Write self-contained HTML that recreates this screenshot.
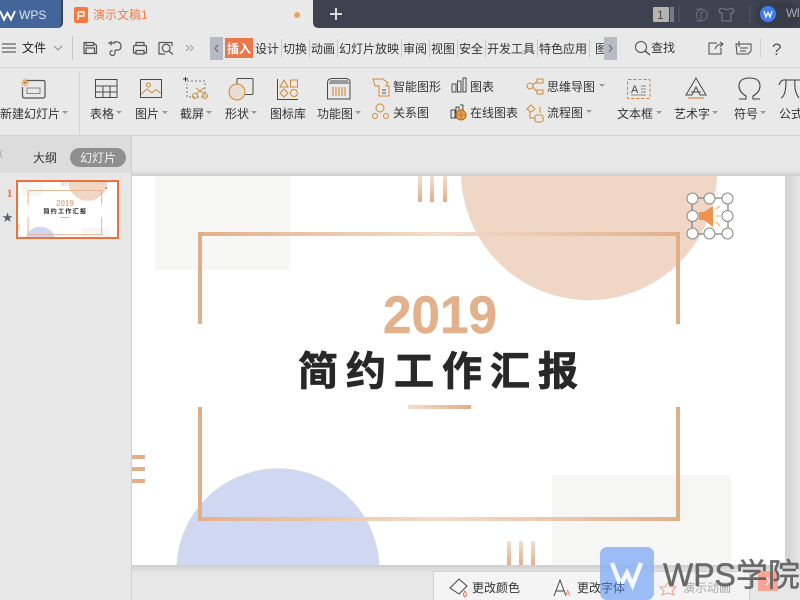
<!DOCTYPE html>
<html lang="zh"><head><meta charset="utf-8"><title>WPS</title>
<style>
html,body{margin:0;padding:0;width:800px;height:600px;overflow:hidden;background:#e7e7e7}
svg{display:block;position:absolute;left:0;top:0}
text{font-family:"Liberation Sans","Noto Sans CJK SC",sans-serif;font-size:12px;fill:#333}
.ic{fill:none;stroke:#4a4a4a;stroke-width:1}
.mi{fill:none;stroke:#555;stroke-width:1.200;stroke-linejoin:round}
.or{fill:none;stroke:#cf8a32;stroke-width:1}
</style></head><body>
<svg width="800" height="600" viewBox="0 0 800 600" xmlns="http://www.w3.org/2000/svg">
<defs>
<linearGradient id="gh" x1="0" x2="1" y1="0" y2="0"><stop offset="0" stop-color="#e2b08a"/><stop offset=".5" stop-color="#f2dccb"/><stop offset="1" stop-color="#e2b08a"/></linearGradient>
<linearGradient id="gm" x1="0" x2="1" y1="0" y2="0"><stop offset="0" stop-color="#f2dccb"/><stop offset="1" stop-color="#e2ae88"/></linearGradient>
<linearGradient id="gv" x1="0" x2="0" y1="0" y2="1"><stop offset="0" stop-color="#f2e0d2"/><stop offset="1" stop-color="#e2ae88"/></linearGradient>
<linearGradient id="sh" x1="0" x2="0" y1="0" y2="1"><stop offset="0" stop-color="#cfcfcf"/><stop offset="1" stop-color="#e7e7e7"/></linearGradient>
<linearGradient id="shr" x1="0" x2="1" y1="0" y2="0"><stop offset="0" stop-color="#d2d2d2"/><stop offset="1" stop-color="#e7e7e7"/></linearGradient>
<clipPath id="ct"><rect x="18" y="182" width="99" height="55"/></clipPath>
<clipPath id="cg"><rect x="587" y="36" width="17" height="24"/></clipPath>
</defs>

<!-- title bar -->
<rect width="800" height="28" fill="#3e4250"/>
<path d="M0 0H61V23Q61 28 56 28H0Z" fill="#44659a"/>
<path d="M63 0H313V22Q313 28 319 28H57Q63 28 63 22Z" fill="#e9e9e9"/>
<path d="M0 11L4 19.500L7.500 13L11 19.500L15 11" fill="none" stroke="#fff" stroke-width="2"/>
<text x="19" y="19" style="fill:#dbe3ef;font-size:12px">WPS</text>
<rect x="74" y="7" width="14" height="16" rx="2" fill="#f47a40"/>
<path d="M78 12H84V16H78M78 12V20" fill="none" stroke="#fff" stroke-width="1.400"/>
<text x="93" y="19" style="fill:#ef7b45">演示文稿1</text>
<circle cx="297" cy="15" r="3" fill="#eaa562"/>
<path d="M336 8V20M330 14H342" stroke="#d8dade" stroke-width="2"/>
<rect x="653" y="7" width="16" height="15" rx="1" fill="#b4b4b4"/>
<text x="657" y="19" style="fill:#5b4a40">1</text>
<path d="M671 7V22M673 7V22" stroke="#b4b4b4"/>
<path d="M679 6V22M750 5V23" stroke="#555967"/>
<circle cx="702" cy="15" r="5.500" fill="none" stroke="#6a6e7a"/><path d="M696 9H702M696 21H702M703 11Q699 15 702 19" fill="none" stroke="#6a6e7a"/>
<path d="M722 8L719 10L720 13H722V21H731V13H733L734 10L731 8Q727 11 722 8Z" fill="none" stroke="#7b7f8b"/>
<rect x="755" y="2" width="45" height="25" rx="12" fill="#383c49"/>
<circle cx="768" cy="14" r="8" fill="#3f7de8"/>
<path d="M764 11L766 17L768 12.500L770 17L772 11" fill="none" stroke="#fff" stroke-width="1.300"/>
<text x="786" y="17" style="fill:#a8abb3" textLength="14" lengthAdjust="spacing">WI</text>

<!-- menu row -->
<rect y="28" width="800" height="108" fill="#e9e9e9"/>
<rect y="67" width="800" height="1" fill="#d6d6d6"/>
<rect y="135" width="800" height="1" fill="#d2d2d2"/>
<path d="M2 44H16M2 48H16M2 52H16" stroke="#444"/>
<text x="22" y="52" style="fill:#222">文件</text>
<path d="M54 46L58 50L62 46" fill="none" stroke="#888"/>
<rect x="72" y="36" width="1" height="24" fill="#c8c8c8"/>
<path d="M84 42.500H93L96.500 45.500V53.500H84ZM86 42.500V45.500H93.500V42.500M86 53.500V48H94.500V53.500" class="mi"/>
<path d="M108 43H115M111 41V45.500M114 42Q121 41 121 46.500Q121 51 115 50M115 50V53M115 53A2.500 2.500 0 1 1 112.500 50.500" class="mi"/>
<path d="M136 45.500V42.500H144V45.500M133.500 53V47Q133.500 45.500 135 45.500H145Q146.500 45.500 146.500 47V53H144V50.500H136V53ZM136 50.500V54H144V50.500" class="mi"/>
<path d="M159 42.500H172V46M159 42.500V54H165M170 48A3.800 3.800 0 1 0 170 48.100M169 51L173 54.500" class="mi"/>
<path d="M186 45L189 48L186 51M190 45L193 48L190 51" fill="none" stroke="#999"/>
<rect x="210" y="37" width="13" height="23" fill="#b6bbc3"/>
<path d="M218 45L215 48.500L218 52" fill="none" stroke="#666"/>
<rect x="225" y="38" width="28" height="20" fill="#e8774a"/>
<text x="227" y="53" style="fill:#fff;font-weight:bold">插入</text>
<text x="255" y="53">设计</text><text x="283" y="53">切换</text><text x="311" y="53">动画</text>
<text x="339" y="53">幻灯片放映</text><text x="403" y="53">审阅</text><text x="431" y="53">视图</text>
<text x="459" y="53">安全</text><text x="487" y="53">开发工具</text><text x="539" y="53">特色应用</text>
<text x="595" y="53" clip-path="url(#cg)">图</text>
<path d="M281.500 39V58M309.500 39V58M337.500 39V58M401.500 39V58M429.500 39V58M457.500 39V58M485.500 39V58M537.500 39V58M589.500 39V58" stroke="#c9c9c9"/>
<rect x="604" y="37" width="13" height="23" fill="#b6bbc3"/>
<path d="M609 45L612 48.500L609 52" fill="none" stroke="#666"/>
<circle cx="641" cy="47" r="5.500" class="ic"/><path d="M645 51L650 55" stroke="#444" stroke-width="1.200"/>
<text x="651" y="52">查找</text>
<path d="M717 43H709V54H721V48M715 49Q717 44 722 44M720 42L723 44L720 47" class="ic"/>
<path d="M736 44H751V51L748 54H737ZM740 48H748M740 51H746M739 41V47M736 44H742" class="ic"/>
<rect x="760" y="38" width="1" height="20" fill="#cfcfcf"/>
<text x="772" y="55" style="font-size:17px;fill:#555">?</text>

<!-- ribbon -->
<rect x="79" y="72" width="1" height="62" fill="#d2d2d2"/>
<path d="M26 80.500H43Q45 80.500 45 82.500V96Q45 98 43 98H24Q22.500 98 22.500 96V87" class="mi"/><rect x="27" y="88" width="13" height="5.500" fill="none" stroke="#888"/>
<path d="M21 82.500H29M25 78.500V86.500M22 79.500L28 85.500M28 79.500L22 85.500" stroke="#d08a35" fill="none" stroke-width=".8"/>
<text x="0" y="118">新建幻灯片</text>
<path d="M95.500 79.500H117V97.500H95.500ZM95.500 86H117M95.500 92H117M103 86V97.500M110 86V97.500" class="ic"/>
<text x="90" y="118">表格</text>
<path d="M140.500 79.500H161.500V97.500H140.500Z" class="ic"/><circle cx="148.500" cy="85" r="2" class="or"/><path d="M141 94L147 89L152 93L156 89.500L161 93.500" class="or"/>
<text x="135" y="118">图片</text>
<path d="M187 81H205V97H187V84" fill="none" stroke="#777" stroke-dasharray="2 2"/>
<path d="M183 79H188M185.500 77V81.500" stroke="#333" fill="none"/>
<circle cx="195" cy="96" r="2.500" class="or"/><circle cx="205" cy="96" r="2.500" class="or"/><path d="M196 94L204 88M204 94L196 88" class="or"/>
<text x="180" y="118">截屏</text>
<rect x="237" y="78.500" width="16" height="16" rx="1" class="ic"/>
<circle cx="237" cy="92" r="8" fill="#e7ddd2" stroke="#cf8a32"/>
<text x="225" y="118">形状</text>
<path d="M277.500 79V99.500H298" class="ic"/>
<path d="M284 80L288 87H280Z" class="or"/><rect x="290.500" y="80" width="7" height="7" class="or"/>
<path d="M284 89L288 93L284 97L280 93Z" class="or"/><circle cx="294" cy="93" r="3.500" class="or"/>
<text x="270" y="118">图标库</text>
<path d="M327.500 83Q327.500 78.500 332 78.500H346Q350 78.500 350 83V99H327.500ZM330 81H348M329 83H349" class="ic"/>
<path d="M333 87V96M336 87V96M339 87V96M342 87V96M345 87V96" stroke="#cf7f25"/>
<text x="317" y="118">功能图</text>
<path d="M373 79H383L388 83L386 86H389V96H379V86H375Z" class="or"/><path d="M382 90H386M382 93H386" stroke="#555"/>
<text x="393" y="91">智能图形</text>
<circle cx="380" cy="108" r="4" class="or"/><circle cx="375" cy="116" r="2.500" class="or"/><circle cx="386" cy="116" r="2.500" class="or"/>
<text x="393" y="117">关系图</text>
<path d="M452 84H456V92H452ZM457.500 81H461V92H457.500ZM463 78H466V92H463Z" class="ic"/>
<text x="470" y="91">图表</text>
<path d="M451 110H455V118H451ZM456 107H459V118H456ZM460 105H463V112" class="ic"/>
<circle cx="461" cy="115" r="5" fill="#e8a24e" stroke="#b9691e"/><path d="M456 115H466M461 110V120" stroke="#a75d17" stroke-width=".6"/>
<text x="470" y="117">在线图表</text>
<circle cx="530" cy="86" r="3" class="or"/><rect x="537" y="79" width="6" height="4" class="or"/><rect x="537" y="90" width="6" height="4" class="or"/><path d="M533 85L537 81M533 87L537 92" class="or"/>
<text x="547" y="91">思维导图</text>
<path d="M531 105L535 109L531 112L527 109Z" class="or"/><rect x="535" y="115" width="8" height="7" rx="2" class="or"/><path d="M530 112V118H535M540 107V113" class="or"/>
<text x="547" y="117">流程图</text>
<rect x="627.500" y="79.500" width="22.500" height="19" rx="1" fill="none" stroke="#cf7f25" stroke-dasharray="3 2"/>
<text x="631" y="93" style="font-size:11px;fill:#444">A</text><path d="M641 86H646M641 89H646M641 92H646M631 95H646" stroke="#888"/>
<text x="617" y="118">文本框</text>
<path d="M686 95L696 78L706 95H700L696 87L692 95ZM691 92H701" class="ic"/><path d="M688 98H704" stroke="#cf7f25"/>
<text x="674" y="118">艺术字</text>
<path d="M739 99H746V96Q739 92 739 86Q739 78 749.500 78Q760 78 760 86Q760 92 753 96V99H760" fill="none" stroke="#444" stroke-width="1.100"/>
<text x="734" y="118">符号</text>
<path d="M779 85Q781 79 786 80H800M786 80Q786 96 781 98M795 80Q794 92 799 98" fill="none" stroke="#444" stroke-width="1.100"/>
<text x="779" y="118">公式</text>
<g fill="#999">
<path d="M62 111H68L65 114Z"/><path d="M116 111H122L119 114Z"/><path d="M162 111H168L165 114Z"/>
<path d="M206 111H212L209 114Z"/><path d="M251 111H257L254 114Z"/><path d="M355 111H361L358 114Z"/>
<path d="M599 84H605L602 87Z"/><path d="M586 110H592L589 113Z"/>
<path d="M656 111H662L659 114Z"/><path d="M712 111H718L715 114Z"/><path d="M760 111H766L763 114Z"/>
</g>

<!-- work area -->
<rect x="0" y="136" width="800" height="464" fill="#e7e7e7"/>
<rect x="0" y="136" width="131" height="37" fill="#dcdcdc"/>
<rect x="131" y="136" width="1" height="464" fill="#cfcfcf"/>
<path d="M2 150L0 154L2 158" fill="none" stroke="#aaa"/>
<text x="33" y="162" style="fill:#333">大纲</text>
<rect x="70" y="148" width="56" height="19" rx="9.500" fill="#8f8f8f"/>
<text x="80" y="162" style="fill:#f3f3f3">幻灯片</text>
<text x="6.500" y="197" style="fill:#f0703c;font-weight:bold;font-family:'Liberation Serif',serif;font-size:12px">1</text>
<path d="M7.500 212.500L8.800 216.200H12.500L9.500 218.500L10.700 222L7.500 219.800L4.300 222L5.500 218.500L2.500 216.200H6.200Z" fill="#59606e"/>

<!-- thumbnail -->
<rect x="17" y="181" width="101" height="57" fill="#fff" stroke="#f0703c" stroke-width="2"/>
<g clip-path="url(#ct)"><g transform="translate(18 182) scale(.1527) translate(-132 -176)">
<rect x="155" y="176" width="135" height="94" fill="#f6f6f4"/><rect x="552" y="475" width="179" height="90" fill="#f6f6f4"/>
<path d="M461.060 176A128 128 0 0 0 716.940 176Z" fill="#f0d7c5"/><path d="M176.620 565A101.500 101.500 0 0 1 379.380 565Z" fill="#d0d7f0"/>
<path d="M418 176h4v26h-4zM430 176h4v26h-4zM443 176h4v26h-4zM507 541h4v24h-4zM519 541h4v24h-4zM531 541h4v24h-4z" fill="#e2ae88"/>
<path d="M132 455h13v4h-13zM132 467h13v4h-13zM132 479h13v4h-13z" fill="#e2ae88"/>
<path d="M198 324V232H680V324M198 407V521H680V407" fill="none" stroke="#e2ae88" stroke-width="6"/>
<rect x="408" y="405" width="63" height="6" fill="#e2ae88"/>
<text x="440" y="333" text-anchor="middle" style="font-size:52px;font-weight:bold;fill:#e2b08a">2019</text>
<text x="298" y="384" style="font-size:40px;font-weight:bold;letter-spacing:8px;fill:#282828">简约工作汇报</text>
<circle cx="710" cy="216" r="8" fill="#ef9450"/>
</g></g>

<!-- slide -->
<rect x="785" y="176" width="15" height="389" fill="url(#shr)"/>
<rect x="132" y="565" width="668" height="8" fill="url(#sh)"/>
<rect x="132" y="136" width="668" height="40" fill="#e7e7e7"/>
<rect x="132" y="170" width="668" height="6" fill="url(#sh)" transform="rotate(180 466 173)"/>
<rect x="132" y="176" width="653" height="389" fill="#fff"/>
<rect x="155" y="176" width="135" height="94" fill="#f6f6f4"/>
<rect x="552" y="475" width="179" height="90" fill="#f6f6f4"/>
<path d="M461.060 176A128 128 0 0 0 716.940 176Z" fill="#f0d7c5"/>
<path d="M176.620 565A101.500 101.500 0 0 1 379.380 565Z" fill="#d0d7f0"/>
<rect x="418" y="176" width="4" height="26" fill="url(#gv)"/><rect x="430" y="176" width="4" height="26" fill="url(#gv)"/><rect x="443" y="176" width="4" height="26" fill="url(#gv)"/>
<rect x="507" y="541" width="4" height="24" fill="url(#gv)"/><rect x="519" y="541" width="4" height="24" fill="url(#gv)"/><rect x="531" y="541" width="4" height="24" fill="url(#gv)"/>
<rect x="132" y="455" width="13" height="4" fill="#e2ae88"/><rect x="132" y="467" width="13" height="4" fill="#e2ae88"/><rect x="132" y="479" width="13" height="4" fill="#e2ae88"/>
<rect x="198" y="232" width="482" height="4" fill="url(#gh)"/>
<rect x="198" y="517" width="482" height="4" fill="url(#gh)"/>
<rect x="198" y="232" width="4" height="92" fill="#e2ae88"/><rect x="676" y="232" width="4" height="92" fill="#e2ae88"/>
<rect x="198" y="407" width="4" height="114" fill="#e2ae88"/><rect x="676" y="407" width="4" height="114" fill="#e2ae88"/>
<rect x="408" y="405" width="63" height="4" fill="url(#gm)"/>
<text x="383" y="333" textLength="114" lengthAdjust="spacingAndGlyphs" style="font-size:53px;font-weight:bold;fill:#e2b08a;stroke:#e2b08a;stroke-width:.4px">2019</text>
<text x="298" y="385" style="font-size:40px;font-weight:bold;letter-spacing:8px;fill:#282828;stroke:#282828;stroke-width:.8px">简约工作汇报</text>

<!-- selected audio -->
<path d="M692 198H728V234H692Z" fill="none" stroke="#666"/>
<path d="M699 212H704L713 206V227L704 220H699Z" fill="#ef9450"/>
<path d="M716 209L720 206M716 216H721M716 222L720 226" stroke="#f2a66c" stroke-width="1"/>
<g fill="#fff" stroke="#888">
<circle cx="692.500" cy="198.500" r="5.500"/><circle cx="709.500" cy="198.500" r="5.500"/><circle cx="727.500" cy="198.500" r="5.500"/>
<circle cx="692.500" cy="216" r="5.500"/><circle cx="727.500" cy="216" r="5.500"/>
<circle cx="692.500" cy="233.500" r="5.500"/><circle cx="709.500" cy="233.500" r="5.500"/><circle cx="727.500" cy="233.500" r="5.500"/>
</g>

<!-- bottom toolbar -->
<rect x="433.500" y="571.500" width="316" height="28.500" fill="#f4f4f4"/>
<path d="M433.500 600V571.500H749.500V600" fill="none" stroke="#cfcfcf"/>
<path d="M450 588L459 579L467 586L459 594Z" fill="none" stroke="#444"/><path d="M465 591Q462 595 465 597Q468 595 465 591Z" fill="none" stroke="#f06c50"/>
<text x="472" y="592">更改颜色</text>
<path d="M554 596L560 580L566 596M556 591H564" fill="none" stroke="#444"/><text x="565" y="596" style="font-size:8px;fill:#f06c50">A</text>
<path d="M668 583L671 587H676L672 591L674 595L668 593L662 595L664 591L660 587H665Z" fill="none" stroke="#f0a090"/>
<text x="683" y="592" style="fill:#aaa">演示动画</text>

<!-- watermark -->
<rect x="600" y="547" width="54" height="53" rx="7" fill="#8fb4f5" fill-opacity=".88"/>
<path d="M612 563L620.500 585L627 573L632.500 585L641 563" fill="none" stroke="#fff" stroke-opacity=".9" stroke-width="4.500"/>
<text x="577" y="592">更改<tspan style="fill:#3f5f96">字体</tspan></text>
<rect x="758" y="571" width="20" height="20" fill="#f9a595"/>
<path d="M766 577L770 581L766 585" fill="none" stroke="#fff"/>
<text x="663" y="586" style="font-size:32px;fill:#5c5c5c;fill-opacity:.9;stroke:#5c5c5c;stroke-opacity:.8;stroke-width:.5px">WPS学院</text>
</svg>
</body></html>
